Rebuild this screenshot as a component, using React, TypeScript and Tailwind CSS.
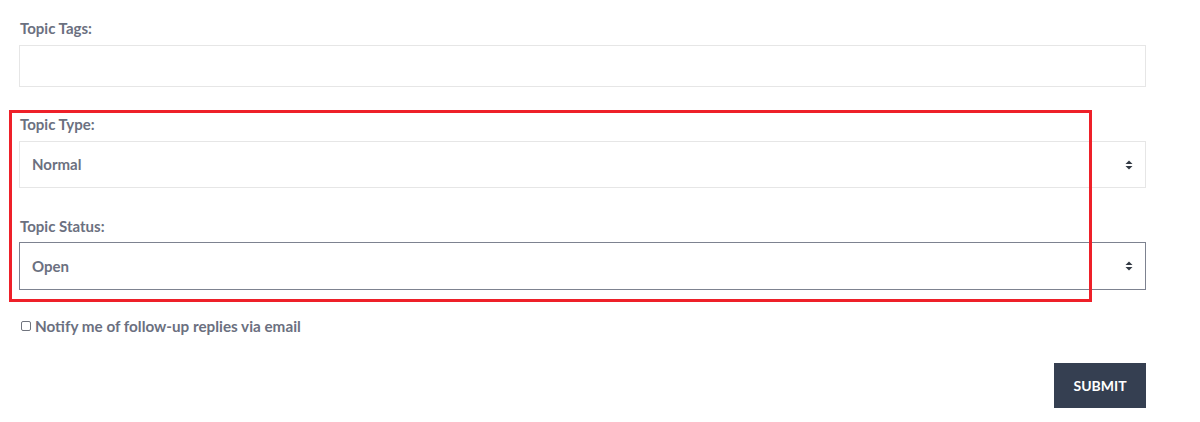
import React from "react";

function Arrows() {
  return (
    <svg width="8" height="10" viewBox="0 0 8 10" className="shrink-0">
      <path d="M0.5 4 L4 0.5 L7.5 4 Z" fill="#333a44" />
      <path d="M0.5 6 L4 9.5 L7.5 6 Z" fill="#333a44" />
    </svg>
  );
}

export default function App() {
  return (
    <div
      className="relative w-[1200px] h-[422px] bg-white text-[#6b7080]"
      style={{ fontFamily: "Lato, 'Open Sans', sans-serif" }}
    >
      <div className="pl-[19px] pt-[18px] w-[1146px] flex flex-col">
        <label className="block text-[15px] font-bold leading-[20px] pl-px">Topic Tags:</label>
        <div className="mt-[7px] h-[42px] border border-[#e6e6e6] bg-white" />

        <label className="block mt-[27px] text-[15px] font-bold leading-[20px] pl-px">Topic Type:</label>
        <div className="mt-[7px] h-[47px] border border-[#e6e6e6] bg-white flex items-center justify-between pl-[12px] pr-[12px]">
          <span className="text-[15px] font-bold">Normal</span>
          <Arrows />
        </div>

        <label className="block mt-[28px] text-[15px] font-bold leading-[20px] pl-px">Topic Status:</label>
        <div className="mt-[6px] h-[48px] border border-[#7d8290] bg-white flex items-center justify-between pl-[12px] pr-[12px]">
          <span className="text-[15px] font-bold">Open</span>
          <Arrows />
        </div>

        <div className="mt-[26px] flex items-center gap-[4px] h-[20px] pl-[2px]">
          <span className="w-[10px] h-[10px] border border-[#70747e] rounded-[2px] bg-white" />
          <span className="text-[15.25px] font-bold">Notify me of follow-up replies via email</span>
        </div>

        <div className="mt-[27px] flex justify-end">
          <button className="w-[92px] h-[45px] bg-[#353f51] text-white text-[14px] font-bold uppercase">
            Submit
          </button>
        </div>
      </div>

      <div className="absolute left-[9px] top-[110px] w-[1083px] h-[192px] border-[3px] border-[#ee2029]" />
    </div>
  );
}
